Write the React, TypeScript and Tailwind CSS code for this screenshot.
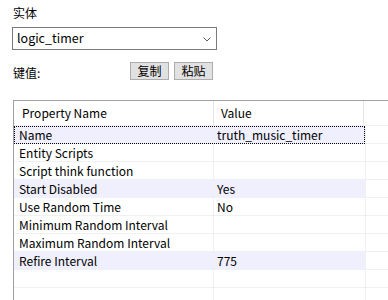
type Row = { name: string; value: string; hl?: boolean; focus?: boolean };

const rows: Row[] = [
  { name: 'Name', value: 'truth_music_timer', hl: true, focus: true },
  { name: 'Entity Scripts', value: '' },
  { name: 'Script think function', value: '' },
  { name: 'Start Disabled', value: 'Yes', hl: true },
  { name: 'Use Random Time', value: 'No' },
  { name: 'Minimum Random Interval', value: '' },
  { name: 'Maximum Random Interval', value: '' },
  { name: 'Refire Interval', value: '775', hl: true },
  { name: '', value: '' },
  { name: '', value: '' },
];

const font = { fontFamily: '"Microsoft YaHei UI", "Noto Sans CJK SC", sans-serif' };

function App() {
  return (
    <div className="w-[388px] h-[300px] bg-white overflow-hidden text-[12px] text-black" style={font}>
      <div className="pl-[13px] pt-[5px] leading-[16px]">实体</div>
      <div className="ml-[12px] mt-[6px] w-[205px] h-[23px] border border-[#7a7a7a] flex items-center justify-between pl-[4px] pr-[5px]">
        <span className="text-[12.5px]">logic_timer</span>
        <svg width="8" height="5" viewBox="0 0 8 5" className="mt-[1px]">
          <polyline points="0.5,0.5 4,4 7.5,0.5" fill="none" stroke="#606060" strokeWidth="1" />
        </svg>
      </div>
      <div className="flex items-center mt-[11px] h-[19px]">
        <span className="ml-[13px] w-[117px] mt-[4px]">键值:</span>
        <button className="w-[39px] h-[18px] bg-[#e1e1e1] border border-[#adadad] leading-[14px]">复制</button>
        <button className="ml-[5px] w-[39px] h-[18px] bg-[#e1e1e1] border border-[#adadad] leading-[14px]">粘贴</button>
      </div>
      <div className="ml-[13px] mt-[20px] border-l border-t border-[#a0a0a0] h-[200px]">
        <div className="flex h-[25px] items-center border-b border-[#f0f0f0]">
          <div className="w-[200px] h-full border-r border-[#e5e5e5] pl-[8px] flex items-center">Property Name</div>
          <div className="w-[150px] h-full border-r border-[#e5e5e5] pl-[7px] flex items-center">Value</div>
          <div className="flex-1 h-full" />
        </div>
        {rows.map((r, i) => (
          <div key={i} className="flex h-[18px] border-b border-[#f0f0f0]">
            <div
              className={`flex w-[351px] h-[18px] -mb-[1px] ${r.hl ? 'bg-[#efeffd]' : ''} ${
                r.focus ? 'outline-1 outline-dotted outline-black -outline-offset-1' : ''
              }`}
            >
              <div className="w-[200px] pl-[5px] leading-[17px] border-r border-[#f0f0f0]">{r.name}</div>
              <div className="w-[151px] pl-[3px] leading-[17px]">{r.value}</div>
            </div>
            <div className="flex-1 border-l border-[#f0f0f0]" />
          </div>
        ))}
      </div>
    </div>
  );
}

export default App;
